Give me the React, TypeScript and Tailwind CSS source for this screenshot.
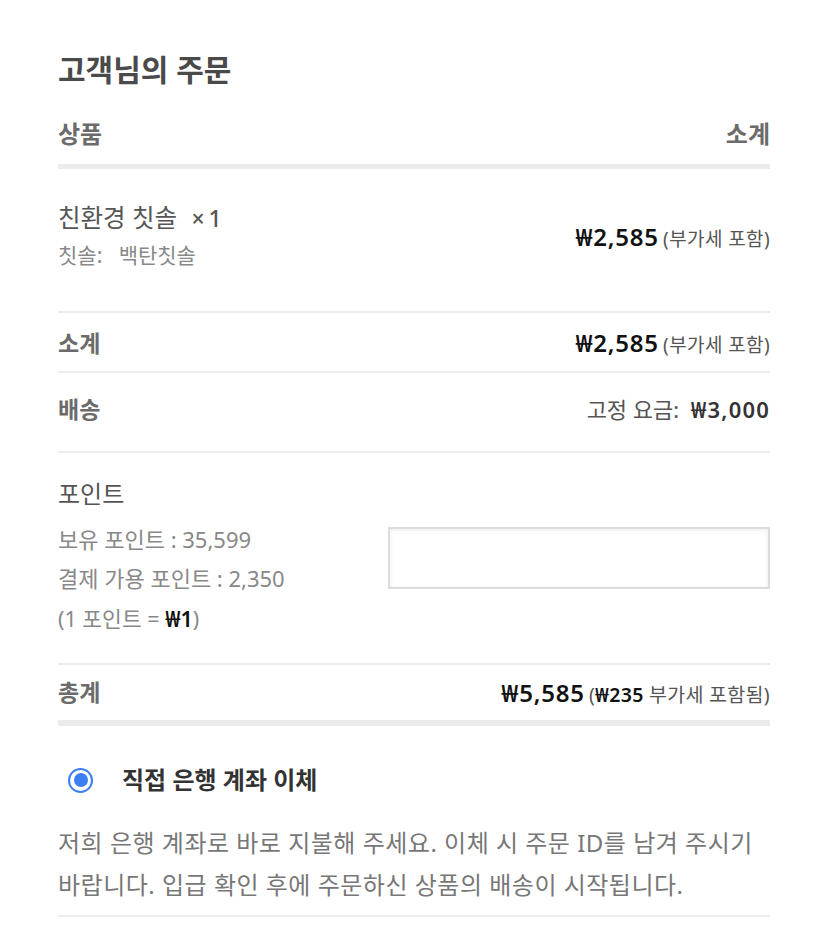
const font = { fontFamily: '"Noto Sans", "Noto Sans CJK KR", sans-serif' };

function Price({ amount, note }: { amount: string; note: string }) {
  return (
    <span className="whitespace-nowrap">
      <span className="text-[24px] font-semibold tracking-[0.8px] text-[#111]">{amount}</span>{" "}
      <span className="text-[19px] tracking-[0.4px] text-[#555]">{note}</span>
    </span>
  );
}

export default function App() {
  return (
    <div className="min-h-screen bg-white" style={font}>
      <div className="px-[58px] pt-[50px] text-[#666]">
        <h2 className="text-[30px] leading-[40px] font-semibold text-[#4a4a4a]">고객님의 주문</h2>

        {/* header */}
        <div className="mt-[24px] flex h-[40px] items-center justify-between text-[24px] font-semibold text-[#6b6b6b]">
          <span>상품</span>
          <span>소계</span>
        </div>
        <div className="mt-[10px] h-[5px] bg-[#ebebeb]" />

        {/* product */}
        <div className="flex h-[144px] items-center justify-between border-b-2 border-[#ebebeb]">
          <div className="-mt-[10px]">
            <div className="text-[24.5px] leading-[32px] text-[#555]">
              친환경 칫솔 <span className="ml-[8px] text-[23px] font-medium">×&thinsp;1</span>
            </div>
            <div className="mt-[8px] text-[21px] leading-[26px] text-[#888]">
              칫솔:&nbsp;&nbsp;&nbsp;백탄칫솔
            </div>
          </div>
          <div className="-mt-[6px]">
            <Price amount="₩2,585" note="(부가세 포함)" />
          </div>
        </div>

        <div className="flex h-[60px] items-center justify-between border-b-2 border-[#ebebeb] pt-[2px]">
          <span className="text-[23px] font-semibold text-[#6b6b6b]">소계</span>
          <Price amount="₩2,585" note="(부가세 포함)" />
        </div>

        <div className="flex h-[80px] items-center justify-between border-b-2 border-[#ebebeb] pb-[6px]">
          <span className="text-[23px] font-semibold text-[#6b6b6b]">배송</span>
          <span className="text-[22px] text-[#555]">
            고정 요금:&nbsp; <span className="font-semibold tracking-[1.2px] text-[#333]">₩3,000</span>
          </span>
        </div>

        {/* points */}
        <div className="flex h-[212px] items-start justify-between border-b-2 border-[#ebebeb] pt-[25px]">
          <div className="text-[#888]">
            <div className="text-[24px] leading-[32px] text-[#555]">포인트</div>
            <div className="mt-[14px] text-[22px] leading-[30px]">보유 포인트 : 35,599</div>
            <div className="mt-[9px] text-[22px] leading-[30px]">결제 가용 포인트 : 2,350</div>
            <div className="mt-[11px] text-[21.5px] leading-[30px]">
              (1 포인트 = <span className="font-semibold text-[#111]">₩1</span>)
            </div>
          </div>
          <input
            type="text"
            className="mt-[49px] h-[62px] w-[382px] border-2 border-[#dcdcdc] bg-white shadow-[inset_0_1px_4px_rgba(0,0,0,0.08)] outline-none"
          />
        </div>

        <div className="flex h-[55px] items-center justify-between">
          <span className="text-[23px] font-semibold text-[#6b6b6b]">총계</span>
          <span className="whitespace-nowrap">
            <span className="text-[24px] font-semibold tracking-[0.8px] text-[#111]">₩5,585</span>{" "}
            <span className="text-[19.5px] tracking-[0.3px] text-[#555]">
              (<span className="font-semibold text-[#111]">₩235</span> 부가세 포함됨)
            </span>
          </span>
        </div>
        <div className="h-[6px] bg-[#ebebeb]" />

        {/* payment */}
        <div className="mt-[36px] flex items-center">
          <span className="ml-[10px] flex h-[25px] w-[25px] items-center justify-center rounded-full border-[2.5px] border-[#3b7ff0] bg-white">
            <span className="h-[14px] w-[14px] rounded-full bg-[#3b7ff0]" />
          </span>
          <span className="ml-[29px] text-[24px] font-semibold text-[#333]">직접 은행 계좌 이체</span>
        </div>
        <p className="mt-[24px] break-keep border-b-2 border-[#ebebeb] pb-[9px] text-[24px] leading-[42px] tracking-[0.5px] text-[#777]">
          저희 은행 계좌로 바로 지불해 주세요. 이체 시 주문 ID를 남겨 주시기 바랍니다. 입급 확인 후에 주문하신 상품의 배송이 시작됩니다.
        </p>
      </div>
    </div>
  );
}
